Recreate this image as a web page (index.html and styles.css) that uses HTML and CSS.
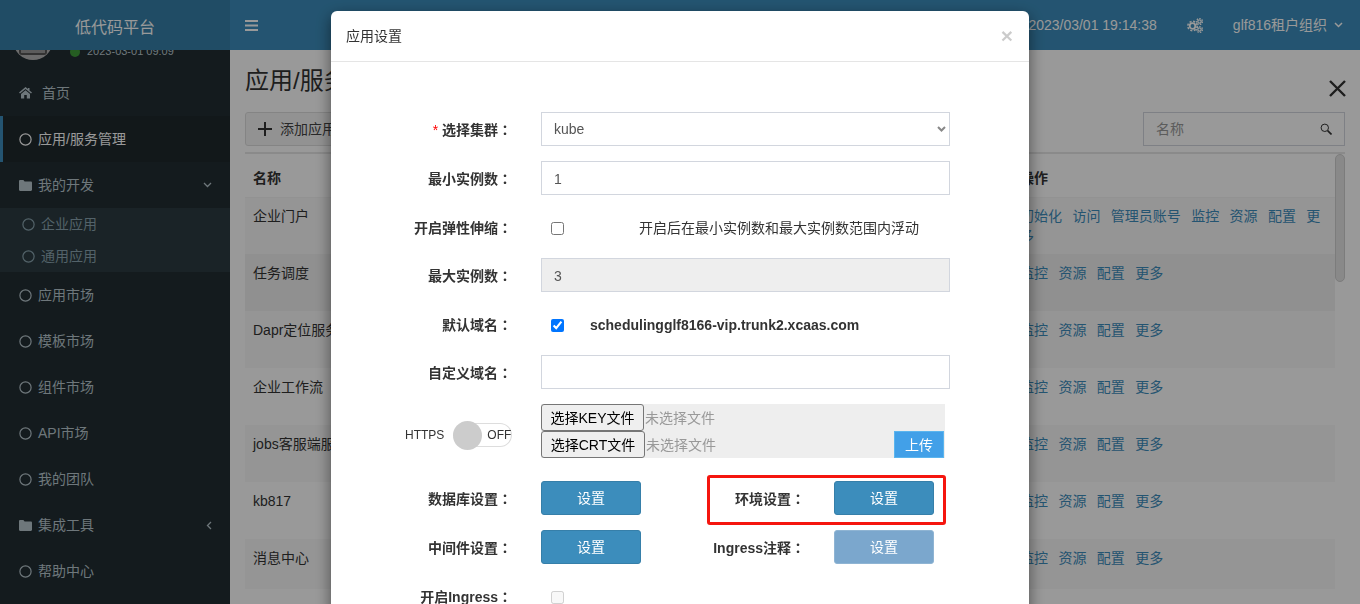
FILE: index.html
```html
<!DOCTYPE html>
<html lang="zh-CN">
<head>
<meta charset="utf-8">
<title>应用设置</title>
<link rel="stylesheet" href="styles.css">
</head>
<body>
<div class="app">
  <aside class="sidebar">
    <div class="logo">低代码平台</div>
    <div class="user-clip">
      <div class="user">
        <svg class="avatar" width="40" height="40" viewBox="0 0 40 40"><circle cx="20" cy="20" r="20" fill="#b5b5b5"/><rect x="7" y="14" width="26" height="20" rx="2" fill="#d8d8d8" stroke="#555" stroke-width="2"/><rect x="8" y="29" width="24" height="4" fill="#999"/></svg>
        <span class="online"></span>
        <span class="login-time">2023-03-01 09:09</span>
      </div>
    </div>
    <nav class="nav">
      <a class="nav-item home"><svg class="ico" width="13" height="12" viewBox="0 0 13 12"><path d="M6.500 0 0 5.500l1 1L6.500 2 12 6.500l1-1-2.500-2.100V1H9v1.100z M2 7l4.500-3.800L11 7v4.500H7.800V8H5.200v3.500H2z" fill="currentColor"/></svg><span>首页</span></a>
      <a class="nav-item active"><svg class="ico" width="13" height="13" viewBox="0 0 13 13"><circle cx="6.500" cy="6.500" r="5.600" fill="none" stroke="currentColor" stroke-width="1.200"/></svg><span>应用/服务管理</span></a>
      <a class="nav-item"><svg class="ico" width="13" height="11" viewBox="0 0 13 11"><path d="M1.200 0h3.200l1.200 1.500h6.200c.7 0 1.200.5 1.200 1.200v7.100c0 .7-.5 1.200-1.200 1.200H1.200C.5 11 0 10.500 0 9.800V1.200C0 .5.500 0 1.200 0z" fill="currentColor"/></svg><span class="grow">我的开发</span><svg class="caret" width="9" height="6" viewBox="0 0 9 6"><path d="M1 1l3.500 3.500L8 1" fill="none" stroke="currentColor" stroke-width="1.300"/></svg></a>
      <div class="sub">
        <a class="sub-item"><svg class="ico" width="13" height="13" viewBox="0 0 13 13"><circle cx="6.500" cy="6.500" r="5.600" fill="none" stroke="currentColor" stroke-width="1.200"/></svg><span>企业应用</span></a>
        <a class="sub-item"><svg class="ico" width="13" height="13" viewBox="0 0 13 13"><circle cx="6.500" cy="6.500" r="5.600" fill="none" stroke="currentColor" stroke-width="1.200"/></svg><span>通用应用</span></a>
      </div>
      <a class="nav-item"><svg class="ico" width="13" height="13" viewBox="0 0 13 13"><circle cx="6.500" cy="6.500" r="5.600" fill="none" stroke="currentColor" stroke-width="1.200"/></svg><span>应用市场</span></a>
      <a class="nav-item"><svg class="ico" width="13" height="13" viewBox="0 0 13 13"><circle cx="6.500" cy="6.500" r="5.600" fill="none" stroke="currentColor" stroke-width="1.200"/></svg><span>模板市场</span></a>
      <a class="nav-item"><svg class="ico" width="13" height="13" viewBox="0 0 13 13"><circle cx="6.500" cy="6.500" r="5.600" fill="none" stroke="currentColor" stroke-width="1.200"/></svg><span>组件市场</span></a>
      <a class="nav-item"><svg class="ico" width="13" height="13" viewBox="0 0 13 13"><circle cx="6.500" cy="6.500" r="5.600" fill="none" stroke="currentColor" stroke-width="1.200"/></svg><span>API市场</span></a>
      <a class="nav-item"><svg class="ico" width="13" height="13" viewBox="0 0 13 13"><circle cx="6.500" cy="6.500" r="5.600" fill="none" stroke="currentColor" stroke-width="1.200"/></svg><span>我的团队</span></a>
      <a class="nav-item"><svg class="ico" width="13" height="11" viewBox="0 0 13 11"><path d="M1.200 0h3.200l1.200 1.500h6.200c.7 0 1.200.5 1.200 1.200v7.100c0 .7-.5 1.200-1.200 1.200H1.200C.5 11 0 10.500 0 9.800V1.200C0 .5.500 0 1.200 0z" fill="currentColor"/></svg><span class="grow">集成工具</span><svg class="caret" width="6" height="9" viewBox="0 0 6 9"><path d="M5 1 1.500 4.500 5 8" fill="none" stroke="currentColor" stroke-width="1.300"/></svg></a>
      <a class="nav-item"><svg class="ico" width="13" height="13" viewBox="0 0 13 13"><circle cx="6.500" cy="6.500" r="5.600" fill="none" stroke="currentColor" stroke-width="1.200"/></svg><span>帮助中心</span></a>
    </nav>
  </aside>
  <div class="main">
    <header class="topbar">
      <svg class="burger" width="13" height="11" viewBox="0 0 13 11"><path d="M0 0h13v2H0zM0 4.500h13v2H0zM0 9h13v2H0z" fill="currentColor"/></svg>
      <span class="clock">2023/03/01 19:14:38</span>
      <svg class="cogs" width="16" height="15" viewBox="0 0 16 15"><g fill="none" stroke="currentColor"><circle cx="5.500" cy="8" r="2.800" stroke-width="1.800"/><circle cx="5.500" cy="8" r="4.700" stroke-width="1.500" stroke-dasharray="2.100 1.600"/><circle cx="12.500" cy="3.500" r="1.700" stroke-width="1.300"/><circle cx="12.500" cy="3.500" r="3" stroke-width="1.200" stroke-dasharray="1.500 1.200"/><circle cx="12.500" cy="11.500" r="1.700" stroke-width="1.300"/><circle cx="12.500" cy="11.500" r="3" stroke-width="1.200" stroke-dasharray="1.500 1.200"/></g></svg>
      <span class="tenant">glf816租户组织</span>
      <svg class="tenant-caret" width="9" height="6" viewBox="0 0 9 6"><path d="M1 1l3.500 3.500L8 1" fill="none" stroke="currentColor" stroke-width="1.500"/></svg>
    </header>
    <section class="content">
      <div class="title-row">
        <h1 class="title">应用/服务管理</h1>
        <svg class="close-page" width="17" height="17" viewBox="0 0 17 17"><path d="M1 1l15 15M16 1 1 16" fill="none" stroke="#333" stroke-width="2.400"/></svg>
      </div>
      <div class="toolbar">
        <button class="add-btn"><svg width="14" height="14" viewBox="0 0 14 14"><path d="M6 0h2v6h6v2H8v6H6V8H0V6h6z" fill="#333"/></svg>添加应用</button>
        <div class="search"><span>名称</span><svg width="12" height="12" viewBox="0 0 12 12"><circle cx="4.800" cy="4.800" r="3.700" fill="none" stroke="#333" stroke-width="1"/><path d="M7.600 7.600 11.500 11.500" stroke="#333" stroke-width="1.600"/></svg></div>
      </div>
      <div class="table-wrap">
        <table class="grid">
          <thead><tr><th class="c-name">名称</th><th>操作</th></tr></thead>
          <tbody>
            <tr class="first"><td>企业门户</td><td class="acts"><a>初始化</a><a>访问</a><a>管理员账号</a><a>监控</a><a>资源</a><a>配置</a><a>更多</a></td></tr>
            <tr class="hover"><td>任务调度</td><td class="acts"><a>监控</a><a>资源</a><a>配置</a><a>更多</a></td></tr>
            <tr><td>Dapr定位服务</td><td class="acts"><a>监控</a><a>资源</a><a>配置</a><a>更多</a></td></tr>
            <tr><td>企业工作流</td><td class="acts"><a>监控</a><a>资源</a><a>配置</a><a>更多</a></td></tr>
            <tr><td>jobs客服端服务</td><td class="acts"><a>监控</a><a>资源</a><a>配置</a><a>更多</a></td></tr>
            <tr><td>kb817</td><td class="acts"><a>监控</a><a>资源</a><a>配置</a><a>更多</a></td></tr>
            <tr class="last"><td>消息中心</td><td class="acts"><a>监控</a><a>资源</a><a>配置</a><a>更多</a></td></tr>
          </tbody>
        </table>
        <div class="thumb"></div>
      </div>
    </section>
  </div>
</div>

<div class="backdrop"></div>
<div class="modal-wrap">
  <div class="modal">
    <div class="modal-head"><span>应用设置</span><span class="modal-x">×</span></div>
    <form class="modal-body">
      <div class="row">
        <label class="lab"><i>*</i> 选择集群<span class="colon">：</span></label>
        <select class="ctl sel"><option>kube</option></select>
      </div>
      <div class="row">
        <label class="lab">最小实例数<span class="colon">：</span></label>
        <input class="ctl" type="text" value="1">
      </div>
      <div class="row row-check">
        <label class="lab">开启弹性伸缩<span class="colon">：</span></label>
        <input class="chk" type="checkbox">
        <span class="hint">开启后在最小实例数和最大实例数范围内浮动</span>
      </div>
      <div class="row">
        <label class="lab">最大实例数<span class="colon">：</span></label>
        <input class="ctl" type="text" value="3" disabled>
      </div>
      <div class="row row-check">
        <label class="lab">默认域名<span class="colon">：</span></label>
        <input class="chk" type="checkbox" checked>
        <b class="domain">schedulingglf8166-vip.trunk2.xcaas.com</b>
      </div>
      <div class="row">
        <label class="lab">自定义域名<span class="colon">：</span></label>
        <input class="ctl" type="text">
      </div>
      <div class="row row-https">
        <div class="https">
          <span>HTTPS</span>
          <span class="switch"><span class="knob"></span><span class="off">OFF</span></span>
        </div>
        <div class="files">
          <div class="file-line"><button type="button" class="file-btn key">选择KEY文件</button><span class="nofile">未选择文件</span></div>
          <div class="file-line"><button type="button" class="file-btn">选择CRT文件</button><span class="nofile">未选择文件</span><button type="button" class="upload">上传</button></div>
        </div>
      </div>
      <div class="row">
        <label class="lab">数据库设置<span class="colon">：</span></label>
        <button type="button" class="btn">设置</button>
        <div class="pair">
          <span class="highlight"></span>
          <label class="lab2">环境设置<span class="colon">：</span></label>
          <button type="button" class="btn">设置</button>
        </div>
      </div>
      <div class="row">
        <label class="lab">中间件设置<span class="colon">：</span></label>
        <button type="button" class="btn">设置</button>
        <div class="pair">
          <label class="lab2">Ingress注释<span class="colon">：</span></label>
          <button type="button" class="btn muted">设置</button>
        </div>
      </div>
      <div class="row row-check">
        <label class="lab">开启Ingress<span class="colon">：</span></label>
        <input class="chk" type="checkbox" disabled>
      </div>
    </form>
  </div>
</div>
</body>
</html>
```
FILE: styles.css
```css
* { box-sizing: border-box; }
html, body { margin: 0; height: 100%; overflow: hidden; }
body {
  font: 14px/20px "Liberation Sans", "Noto Sans CJK SC", sans-serif;
  color: #333;
  background: #fff;
}
a { color: inherit; text-decoration: none; }

.app { display: flex; height: 604px; overflow: hidden; }

/* sidebar */
.sidebar { width: 230px; flex: none; background: #222d32; color: #b8c7ce; }
.logo {
  height: 50px; background: #367fa9; color: #fff;
  font-size: 16px; line-height: 55px; text-align: center;
}
.user-clip { height: 20px; overflow: hidden; }
.user { display: flex; align-items: flex-start; margin-top: -30px; padding-left: 13px; height: 50px; }
.avatar { flex: none; }
.online { width: 10px; height: 10px; border-radius: 50%; background: #3f9c3a; margin: 27px 0 0 17px; flex: none; }
.login-time { font-size: 11px; line-height: 14px; margin: 24px 0 0 7px; }

.nav-item { display: flex; align-items: center; height: 46px; padding: 0 18px 0 19px; }
.nav-item .ico { flex: none; margin-right: 6px; }
.nav-item .grow { flex: 1; }
.nav-item.home .ico { margin-right: 10px; }
.nav-item.active { background: #1e282c; color: #fff; box-shadow: inset 3px 0 0 #3c8dbc; }
.caret { flex: none; }
.sub { background: #2c3b41; color: #8aa4af; padding: 0 0 0 1px; }
.sub-item { display: flex; align-items: center; height: 32px; padding-left: 21px; }
.sub-item .ico { margin-right: 6px; }

/* header and main */
.main { flex: 1; min-width: 0; display: flex; flex-direction: column; }
.topbar {
  height: 50px; flex: none; background: #3c8dbc; color: #fff;
  display: flex; align-items: center; padding: 0 17px 0 15px;
}
.burger { flex: none; }
.clock { margin-left: auto; }
.cogs { margin-left: 30px; flex: none; }
.tenant { margin-left: 30px; }
.tenant-caret { margin-left: 7px; flex: none; }

.content { flex: 1; padding: 16px 15px 0; min-height: 0; }
.title-row { display: flex; justify-content: space-between; align-items: center; height: 30px; }
.title { margin: 0; font-size: 24px; font-weight: 400; line-height: 30px; color: #333; }
.close-page { margin-right: -1px; margin-top: 14px; }
.toolbar { display: flex; justify-content: space-between; margin-top: 16px; }
.add-btn {
  height: 34px; width: 140px; display: flex; align-items: center; gap: 8px;
  padding: 0 12px; background: #f4f4f4; border: 1px solid #ddd; border-radius: 3px;
  font: inherit; color: #444;
}
.search {
  width: 202px; height: 34px; border: 1px solid #d2d6de; background: #fff;
  display: flex; align-items: center; justify-content: space-between;
  padding: 0 12px; color: #999;
}
.table-wrap { position: relative; margin-top: 6px; border-top: 2px solid #e6e6e6; padding-right: 10px; }
.grid { width: 100%; border-collapse: collapse; table-layout: fixed; }
.grid th, .grid td { padding: 9px 8px 0; text-align: left; vertical-align: top; }
.grid thead tr { height: 43px; border-bottom: 1px solid #f4f4f4; }
.grid th { font-weight: 700; padding-top: 14px; }
.c-name { width: 767px; }
.grid tbody tr { height: 57px; }
.grid tbody tr:nth-child(odd) { background: #f8f8f8; }
.grid tbody tr.first td { padding-top: 8px; }
.grid tbody tr.hover { background: #f0f0f0; }
.grid tbody tr.last { height: 50px; }
.acts a { color: #3c8dbc; margin-right: 10.4px; }
.thumb {
  position: absolute; right: 0; top: 0; width: 10px; height: 128px;
  background: #e4e4e4; border: 1px solid #cfcfcf; border-radius: 5px;
}

/* overlay */
.backdrop { position: fixed; inset: 0; background: rgba(0, 0, 0, .4); }
.modal-wrap { position: fixed; inset: 0; overflow: hidden; padding: 11px 0 0 331px; }
.modal {
  width: 698px; background: #fff; border-radius: 6px;
  box-shadow: 0 5px 15px rgba(0, 0, 0, .5);
}
.modal-head {
  height: 51px; padding: 15px 15px 0; border-bottom: 1px solid #e5e5e5;
  display: flex; justify-content: space-between; color: #333;
}
.modal-x { font-size: 21px; font-weight: 700; color: #000; opacity: .2; line-height: 20px; margin: 0 1px 0 0; }
.modal-body { padding-top: 50px; }
.row { display: flex; align-items: center; height: 34px; margin-bottom: 15px; }
.lab { width: 181px; margin: 2px 29px 0 0; flex: none; text-align: right; font-weight: 700; }
.lab i { color: #f00; font-style: normal; font-weight: 400; }
.colon { font-family: "Noto Sans CJK TC", sans-serif; font-feature-settings: "locl" 0; line-height: 1; }
.ctl {
  width: 409px; height: 34px; padding: 2px 12px 0; border: 1px solid #d2d6de;
  background: #fff; color: #555; font: inherit; border-radius: 0;
}
.ctl:disabled { background: #eee; }
.sel {
  appearance: none; padding-top: 0;
  background: #fff url("data:image/svg+xml,%3Csvg xmlns='http://www.w3.org/2000/svg' width='9' height='6'%3E%3Cpath d='M1 1l3.500 3.500L8 1' fill='none' stroke='%23888' stroke-width='2'/%3E%3C/svg%3E") no-repeat right 3px center;
}
.row-check { height: 36px; margin-bottom: 12px; }
.row-check .lab { margin-top: 0; }
.chk { width: 13px; height: 13px; margin: 0 0 0 10px; flex: none; }
.hint { margin-left: 75px; }
.domain { margin-left: 26px; }

.row-https { height: 54px; margin-bottom: 23px; }
.https {
  width: 210px; flex: none; display: flex; align-items: center;
  padding-left: 74px; gap: 9px; margin-top: 8px; font-size: 12px;
}
.switch {
  display: flex; align-items: center; width: 59px; height: 24px;
  border: 1px solid #ddd; border-left: 0; border-radius: 12px;
}
.knob { width: 29px; height: 29px; border-radius: 50%; background: #ccc; flex: none; }
.off { margin-left: 5px; }
.files { width: 404px; height: 54px; background: #eee; }
.file-line { display: flex; align-items: center; height: 27px; }
.file-btn {
  width: 104px; height: 27px; padding: 0; border: 1px solid #767676; border-radius: 3px;
  background: #efefef; color: #000; font: inherit; flex: none;
}
.file-btn.key { width: 103px; }
.nofile { color: #999; margin-left: 1px; }
.upload {
  margin-left: auto; margin-right: 1px; width: 50px; height: 27px; padding: 0;
  background: #42a0e8; border: 1px solid #5bb5ee; color: #fff; font: inherit;
}
.btn {
  width: 100px; height: 34px; padding: 0; flex: none;
  background: #3c8dbc; border: 1px solid #367fa9; border-radius: 3px;
  color: #fff; font: inherit;
}
.btn.muted { background: #7ba7cd; border-color: #8fb4d3; }
.pair { position: relative; display: flex; align-items: center; }
.lab2 { width: 164px; margin: 2px 29px 0 0; text-align: right; font-weight: 700; }
.highlight {
  position: absolute; left: 66px; top: -6px; width: 239px; height: 50px;
  border: 3px solid #f5160f; border-radius: 3px;
}
```
